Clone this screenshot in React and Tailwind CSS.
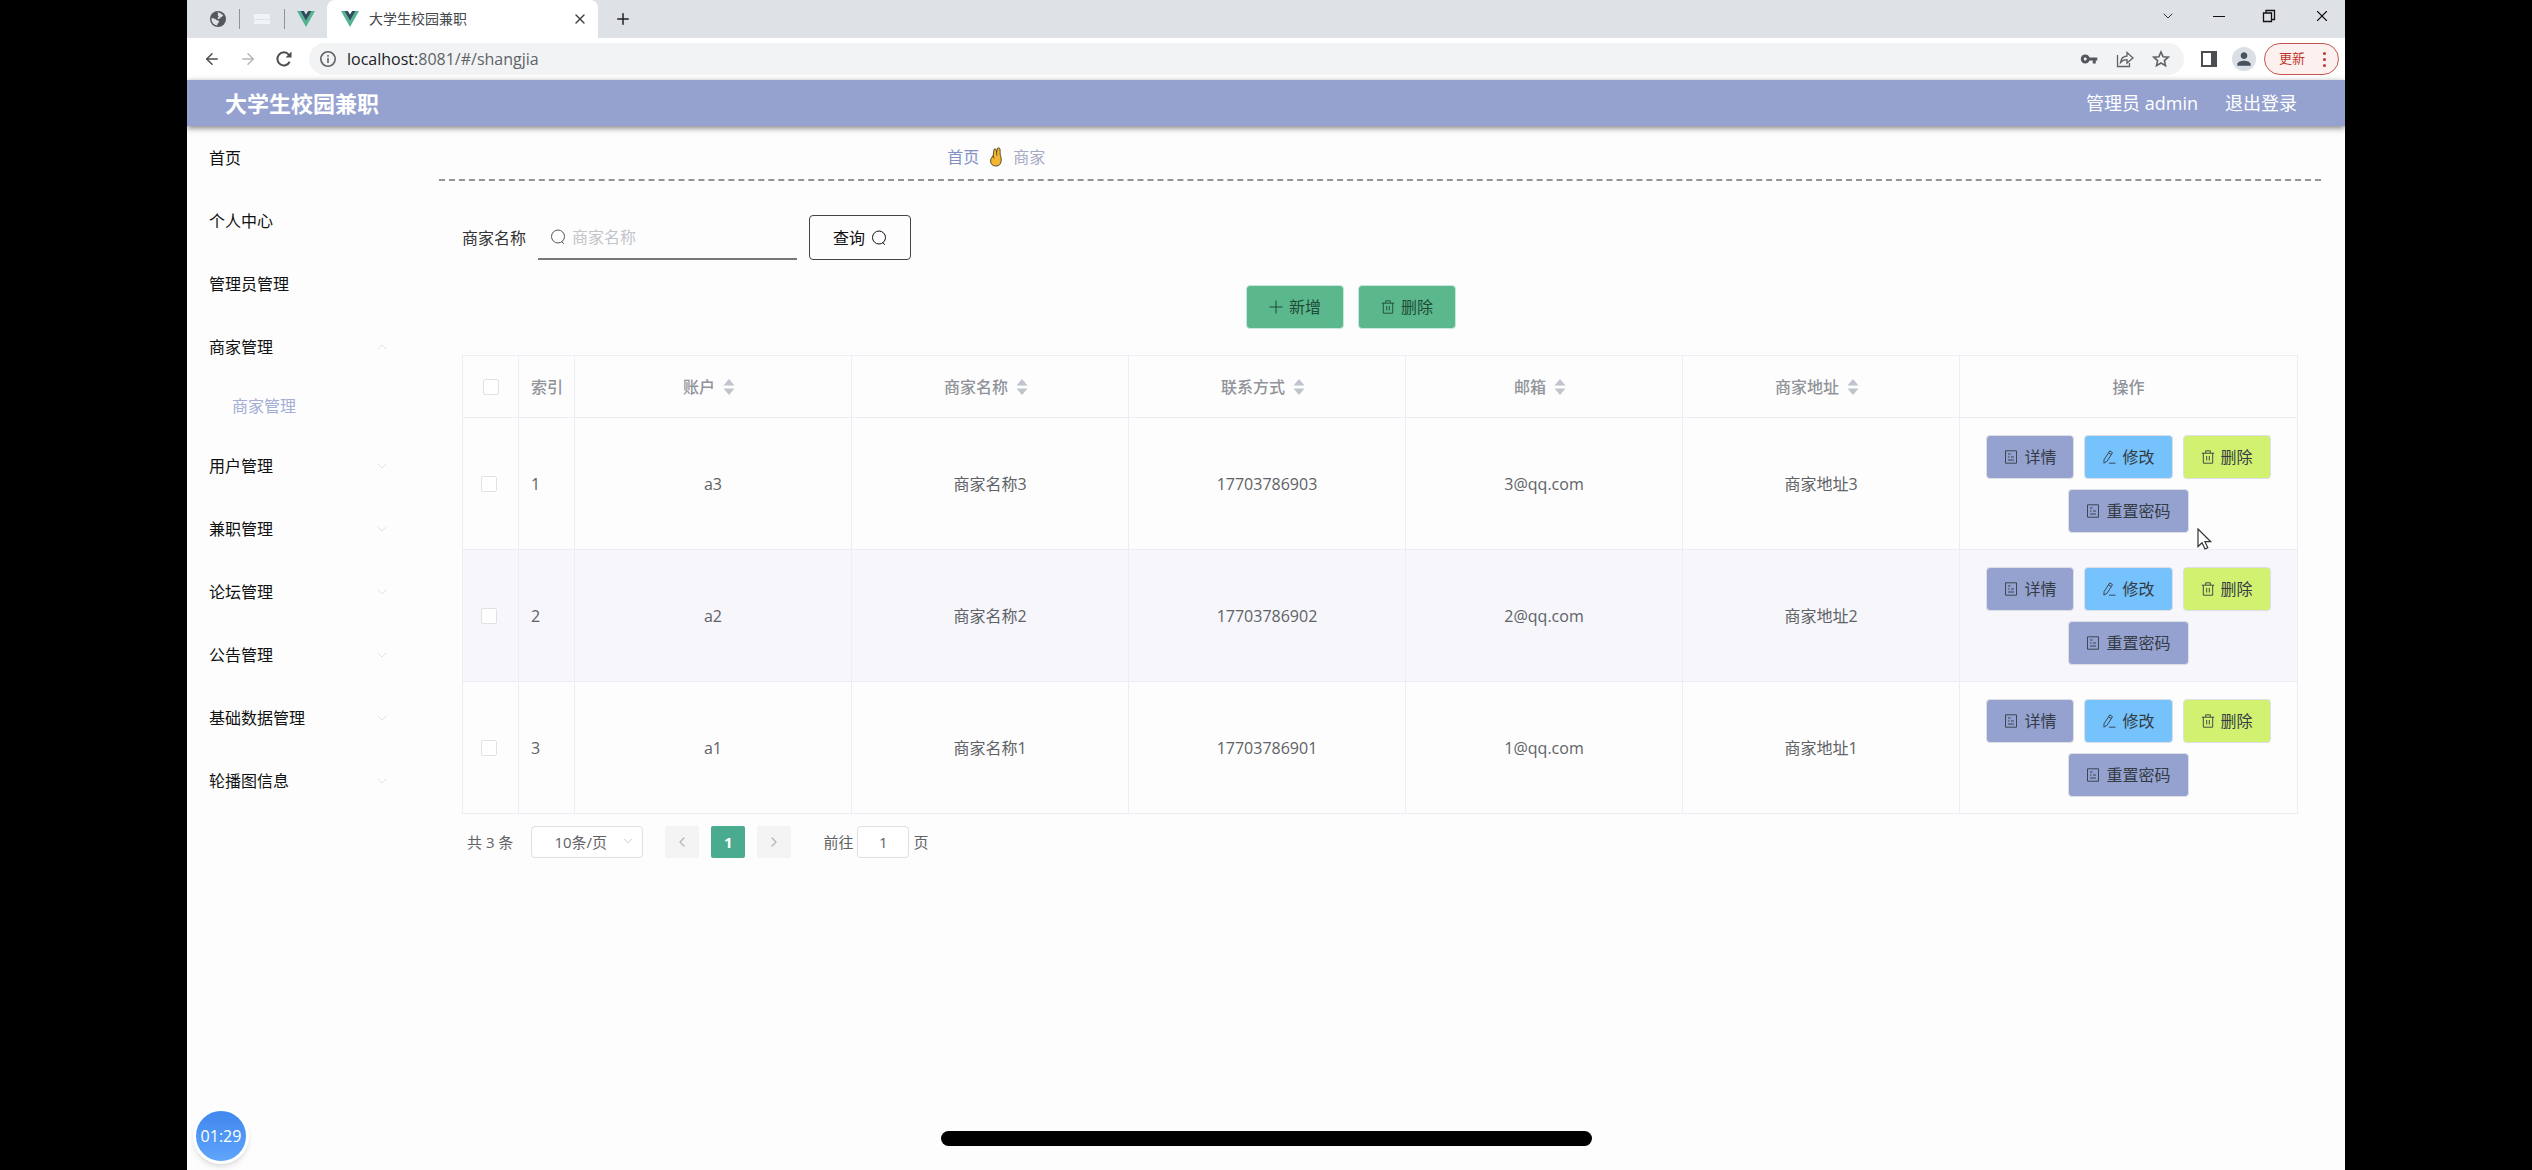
import { useState } from "react";
import { MdVpnKey, MdPerson } from "react-icons/md";
import {
  ArrowLeft,
  ArrowRight,
  ChevronDown,
  ChevronLeft,
  ChevronRight,
  ChevronUp,
  Plus,
  X,
} from "lucide-react";

const menus = [
  { label: "首页" },
  { label: "个人中心" },
  { label: "管理员管理" },
  { label: "商家管理", open: true, children: ["商家管理"] },
  { label: "用户管理", children: [] },
  { label: "兼职管理", children: [] },
  { label: "论坛管理", children: [] },
  { label: "公告管理", children: [] },
  { label: "基础数据管理", children: [] },
  { label: "轮播图信息", children: [] },
];

const columns = ["账户", "商家名称", "联系方式", "邮箱", "商家地址"];

const rows = [
  ["a3", "商家名称3", "17703786903", "3@qq.com", "商家地址3"],
  ["a2", "商家名称2", "17703786902", "2@qq.com", "商家地址2"],
  ["a1", "商家名称1", "17703786901", "1@qq.com", "商家地址1"],
];

const VueLogo = () => (
  <svg viewBox="0 0 18 16" className="h-4 w-[18px] shrink-0">
    <path d="M0 0h6.8L9 3.8 11.2 0H18L9 16z" fill="#56b392" />
    <path d="M3.6 0h3.2L9 3.8 11.2 0h3.2L9 9.6z" fill="#34495e" />
  </svg>
);

const GlobeIcon = () => (
  <svg viewBox="0 0 18 18" className="size-[18px]">
    <circle cx="9" cy="9" r="8" fill="#54585d" />
    <path
      d="M8 2.500c2.500-.3 5 1 6.300 3.300-1 .2-1.300 1.200-2.300 1.400-1.200.2-1 1.600-2.200 1.700-1.500.1-1.400-1.300-.4-1.900 1-.7-.8-1-.6-2 .1-.8.8-1.200-.8-2.500z"
      fill="#dee1e6"
    />
    <path
      d="M2.400 8.300c2.200-.2 3.500.4 4.800 1.400 1 .8 2.800.3 2.900 1.800.1 1.300-1.300 1.300-1.500 2.300-.2.900-.3 1.500-1 1.700-3-.6-5.300-3.500-5.200-7.200z"
      fill="#dee1e6"
    />
  </svg>
);

const ReloadIcon = () => (
  <svg viewBox="0 0 18 18" className="size-[18px]" fill="none" stroke="#4a4d51" strokeWidth="2">
    <path d="M14.700 11.800A6.500 6.500 0 1 1 13.800 4.600L15.500 6.300" />
    <path d="M16.500 1.500v6h-6z" fill="#4a4d51" stroke="none" />
  </svg>
);

const InfoIcon = () => (
  <svg viewBox="0 0 18 18" className="size-[18px] shrink-0" fill="none" stroke="#5f6368" strokeWidth="1.600">
    <circle cx="9" cy="9" r="7.200" />
    <path d="M9 8v5M9 5v1.800" />
  </svg>
);

const ShareIcon = () => (
  <svg viewBox="0 0 18 18" className="size-[18px]" fill="none" stroke="#5f6368" strokeWidth="1.300">
    <path d="M1.500 5v11.500h12V13" />
    <path d="M4.500 12.500C5 8.500 7.500 6.300 11 6V2.500L17 8l-6 5v-3.300c-3 0-5 .8-6.500 2.800z" />
  </svg>
);

const StarIcon = () => (
  <svg viewBox="0 0 18 18" className="size-[18px]" fill="none" stroke="#5f6368" strokeWidth="1.600">
    <path d="M9 2l2.100 4.700 5.100.5-3.800 3.400 1.100 5L9 13l-4.500 2.600 1.100-5L1.800 7.200l5.100-.5z" />
  </svg>
);

const PanelIcon = () => (
  <svg viewBox="0 0 18 18" className="size-[18px]" fill="none" stroke="#4a4d51" strokeWidth="2">
    <path d="M2 2h14v14H2z" />
    <path d="M11 2h5v14h-5z" fill="#4a4d51" stroke="none" />
  </svg>
);

const RestoreIcon = () => (
  <svg viewBox="0 0 14 14" className="size-3.5" fill="none" stroke="#111" strokeWidth="1.300">
    <path d="M1.500 4h8v8.500h-8zM4 4V1.500h8.500v9H9.500" />
  </svg>
);

const SearchIcon = () => (
  <svg viewBox="0 0 16 16" className="size-4 shrink-0" fill="none" stroke="currentColor">
    <circle cx="8" cy="7.500" r="6.500" />
    <path d="M11.500 12.500l2.500 2.300" />
  </svg>
);

const TrashIcon = () => (
  <svg viewBox="0 0 14 14" className="size-3.5 shrink-0" fill="none" stroke="currentColor" strokeWidth="0.900">
    <path d="M.8 3.200h12.400M2.300 3.200v10h9.400v-10M4.700 3V.8h4.600V3M5.700 6v4.500M8.300 6v4.500" />
  </svg>
);

const DocIcon = () => (
  <svg viewBox="0 0 14 14" className="size-3.5 shrink-0" fill="none" stroke="currentColor" strokeWidth="0.900">
    <path d="M1.500.8h11v12.400h-11zM4 4h2.500M4 7h1.500M7 7h3M4 10h6" />
  </svg>
);

const EditIcon = () => (
  <svg viewBox="0 0 14 14" className="size-3.5 shrink-0" fill="none" stroke="currentColor" strokeWidth="0.900">
    <path d="M7.800.9l2.700 1.700L5 11.300l-3.100 1.800.2-3.500zM6.600 2.900l2.700 1.600M7 13.200h6.500" />
  </svg>
);

const PlusIcon = () => (
  <svg viewBox="0 0 14 14" className="size-3.5 shrink-0" fill="none" stroke="currentColor">
    <path d="M7 .5v13M.5 7h13" />
  </svg>
);

const HandIcon = () => (
  <svg viewBox="0 0 14 20" className="h-5 w-3.5" stroke="#4a3f25" strokeWidth="0.900" strokeLinejoin="round">
    <path
      d="M2 11.500L4.200 8.500 5 2.500Q6 1 7 2.500L7.600 5 8.500 1.200Q10 .2 11 1.800L11.200 8Q12.500 10 12.200 14 11.500 19 7 19 1.800 19 1.600 14z"
      fill="#f2b630"
    />
    <path d="M4.200 8.500L5 11.500M7.600 5L7.800 8.500" fill="none" />
  </svg>
);

const SortCaret = () => (
  <svg viewBox="0 0 12 16" className="mx-2 h-4 w-3" fill="#c0c4cc">
    <path d="M6 0l5.500 6.500H.5zM6 16L.5 9.500h11z" />
  </svg>
);

const BrowserBar = () => (
  <div className="font-['Open_Sans','Noto_Sans_CJK_SC',sans-serif]">
    <div className="flex h-[38px] items-center bg-[#dee1e6] pl-[22px]">
      <GlobeIcon />
      <span className="ml-3 h-5 w-px bg-[#8f9296]" />
      <span className="mx-3.5 flex h-2.5 w-4 flex-col justify-center bg-[#f0f3f7]">
        <span className="h-px bg-[#dee1e6]" />
      </span>
      <span className="mr-3 h-5 w-px bg-[#8f9296]" />
      <VueLogo />
      <div className="ml-3 flex h-full w-[271px] items-center rounded-t-lg bg-white pr-2.5 pl-3.5">
        <VueLogo />
        <span className="ml-2.5 flex-1 text-sm text-[#45484d]">大学生校园兼职</span>
        <button type="button" aria-label="关闭标签页">
          <X className="size-4 text-[#3c4043]" />
        </button>
      </div>
      <button type="button" aria-label="新标签页" className="ml-4">
        <Plus className="size-[18px] text-[#202124]" />
      </button>
      <div className="mr-3.5 mb-1.5 ml-auto flex items-center gap-[37px]">
        <ChevronDown className="size-4 text-[#333]" strokeWidth={1.5} />
        <span className="h-px w-3 bg-[#111]" />
        <RestoreIcon />
        <X className="size-[18px] text-[#111]" strokeWidth={1.5} />
      </div>
    </div>

    <div className="flex h-[42px] items-center bg-white pr-1.5 pl-4">
      <ArrowLeft className="size-[18px] text-[#4a4d51]" />
      <ArrowRight className="ml-[18px] size-[18px] text-[#b4b6b9]" />
      <span className="ml-[18px]">
        <ReloadIcon />
      </span>
      <div className="ml-4 flex h-8 flex-1 items-center rounded-full bg-[#f1f3f4] pr-3.5 pl-2.5">
        <InfoIcon />
        <span className="ml-2.5 text-base text-[#5f6368]">
          <span className="text-[#202124]">localhost:</span>8081/#/shangjia
        </span>
        <span className="ml-auto flex items-center gap-[18px]">
          <MdVpnKey className="size-[18px] text-[#54585d]" />
          <ShareIcon />
          <StarIcon />
        </span>
      </div>
      <span className="ml-4">
        <PanelIcon />
      </span>
      <span className="ml-3.5 flex size-6 items-center justify-center rounded-full bg-[#dadfe6]">
        <MdPerson className="size-5 text-[#47525f]" />
      </span>
      <button
        type="button"
        className="ml-2 flex h-8 w-[75px] items-center justify-between rounded-full border border-[#c5564f] bg-[#fdf1f0] pr-3 pl-3.5 text-[13px] text-[#c0352b]"
      >
        更新
        <span className="flex flex-col gap-[3px]">
          <i className="size-[3px] rounded-full bg-[#c0352b]" />
          <i className="size-[3px] rounded-full bg-[#c0352b]" />
          <i className="size-[3px] rounded-full bg-[#c0352b]" />
        </span>
      </button>
    </div>
  </div>
);

const Sidebar = () => (
  <nav className="w-[252px] shrink-0 text-base text-[#111]">
    {menus.map((menu) => (
      <div key={menu.label}>
        <a href="#/" className="flex h-[63px] items-center justify-between pr-[49px] pl-[22px]">
          {menu.label}
          {menu.children &&
            (menu.open ? (
              <ChevronUp className="size-4 text-[#e2e3e6]" strokeWidth={1.5} />
            ) : (
              <ChevronDown className="size-4 text-[#e2e3e6]" strokeWidth={1.5} />
            ))}
        </a>
        {menu.open &&
          menu.children.map((child) => (
            <a
              key={child}
              href="#/shangjia"
              className="flex h-14 items-center pl-[45px] text-[#a3aed6]"
            >
              {child}
            </a>
          ))}
      </div>
    ))}
  </nav>
);

const ActionButton = ({ icon, color, children }) => (
  <button
    type="button"
    className={`flex h-11 items-center gap-1.5 rounded border border-[#dcdfe6] px-[17px] text-[#333b45] ${color}`}
  >
    {icon}
    {children}
  </button>
);

const checkboxClass =
  "block size-4 appearance-none rounded-xs border border-[#dfe1e6] bg-white checked:bg-[#4aab8f]";

const ShopTable = () => {
  const [selected, setSelected] = useState([]);

  const toggle = (id) =>
    setSelected((prev) =>
      prev.includes(id) ? prev.filter((item) => item !== id) : [...prev, id]
    );

  const toggleAll = () =>
    setSelected(selected.length === rows.length ? [] : rows.map((row) => row[0]));

  return (
    <table className="mt-[26px] w-full table-fixed border-collapse border border-[#ebeef5] text-base text-[#606266] [&_td]:border [&_td]:border-[#ebeef5] [&_th]:border [&_th]:border-[#ebeef5]">
      <colgroup>
        <col className="w-14" />
        <col className="w-14" />
        {columns.map((column) => (
          <col key={column} />
        ))}
        <col className="w-[338px]" />
      </colgroup>
      <thead>
        <tr className="h-[62px] text-[#909399]">
          <th className="pl-5">
            <input
              type="checkbox"
              aria-label="全选"
              className={checkboxClass}
              checked={selected.length === rows.length}
              onChange={toggleAll}
            />
          </th>
          <th className="pl-3 text-left font-medium">索引</th>
          {columns.map((column) => (
            <th key={column} className="font-medium">
              <span className="flex items-center justify-center">
                {column}
                <SortCaret />
              </span>
            </th>
          ))}
          <th className="font-medium">操作</th>
        </tr>
      </thead>
      <tbody>
        {rows.map((row, index) => (
          <tr key={row[0]} className="h-[132px] even:bg-[#f6f6fb]">
            <td className="pl-[18px]">
              <input
                type="checkbox"
                aria-label={`选择 ${row[0]}`}
                className={checkboxClass}
                checked={selected.includes(row[0])}
                onChange={() => toggle(row[0])}
              />
            </td>
            <td className="pl-3">{index + 1}</td>
            {row.map((value) => (
              <td key={value} className="text-center">
                {value}
              </td>
            ))}
            <td>
              <div className="flex flex-wrap justify-center gap-2.5">
                <ActionButton icon={<DocIcon />} color="bg-[#95a2cf]">
                  详情
                </ActionButton>
                <ActionButton icon={<EditIcon />} color="bg-[#75c2fc]">
                  修改
                </ActionButton>
                <ActionButton icon={<TrashIcon />} color="bg-[#d2f170]">
                  删除
                </ActionButton>
                <ActionButton icon={<DocIcon />} color="bg-[#95a2cf]">
                  重置密码
                </ActionButton>
              </div>
            </td>
          </tr>
        ))}
      </tbody>
    </table>
  );
};

const Pagination = () => (
  <div className="mt-3 flex h-8 items-center pl-[5px] text-[15px] text-[#606266]">
    <span>共 3 条</span>
    <div className="relative ml-[18px]">
      <select
        aria-label="每页条数"
        className="block h-8 w-[112px] appearance-none rounded border border-[#dcdfe6] bg-white pl-[22px]"
      >
        <option>10条/页</option>
      </select>
      <ChevronDown
        className="pointer-events-none absolute top-2 right-2 size-3.5 text-[#c0c4cc]"
        strokeWidth={1.5}
      />
    </div>
    <button
      type="button"
      aria-label="上一页"
      className="ml-[22px] flex h-8 w-[34px] items-center justify-center rounded-xs bg-[#f4f4f5]"
    >
      <ChevronLeft className="size-4 text-[#b4b8c0]" />
    </button>
    <button
      type="button"
      className="ml-3 h-8 w-[34px] rounded-xs bg-[#4aab8f] font-bold text-white"
    >
      1
    </button>
    <button
      type="button"
      aria-label="下一页"
      className="ml-3 flex h-8 w-[34px] items-center justify-center rounded-xs bg-[#f4f4f5]"
    >
      <ChevronRight className="size-4 text-[#b4b8c0]" />
    </button>
    <label htmlFor="page" className="ml-8">
      前往
    </label>
    <input
      id="page"
      type="text"
      defaultValue="1"
      className="mx-1 h-8 w-[52px] rounded border border-[#dcdfe6] bg-white text-center"
    />
    <span>页</span>
  </div>
);

const App = () => {
  return (
    <div className="min-h-screen bg-black px-[187px] font-['Open_Sans','Noto_Sans_CJK_SC',sans-serif]">
      <div className="relative min-h-screen bg-[#fdfdfd]">
        <BrowserBar />

        <header className="flex h-[46px] items-center bg-[#95a2cf] pr-12 pl-[38px] text-white shadow-[0_2px_6px_rgba(0,0,0,0.5)]">
          <h1 className="text-[22px] font-bold">大学生校园兼职</h1>
          <span className="ml-auto text-lg">管理员 admin</span>
          <button type="button" className="ml-[27px] text-lg">
            退出登录
          </button>
        </header>

        <div className="flex">
          <Sidebar />

          <main className="mr-6 flex-1">
            <div className="flex h-[55px] items-center gap-2.5 border-b-2 border-dashed border-[#949494] pt-2 pl-[27%] text-base">
              <a href="#/" className="text-[#8490c4]">
                首页
              </a>
              <HandIcon />
              <span className="text-[#a5abc4]">商家</span>
            </div>

            <div className="px-[23px] pt-[34px]">
              <form className="flex h-[45px] items-center text-base">
                <label htmlFor="shopName" className="text-[#333]">
                  商家名称
                </label>
                <div className="ml-3 flex h-full w-[259px] items-center gap-1.5 border-b-2 border-[#777] pl-3 text-[#555]">
                  <SearchIcon />
                  <input
                    id="shopName"
                    type="text"
                    placeholder="商家名称"
                    className="w-full outline-none placeholder:text-[#c3c5cb]"
                  />
                </div>
                <button
                  type="button"
                  className="ml-3 flex h-full items-center gap-1.5 rounded border border-[#444] px-[23px] text-[#111]"
                >
                  查询
                  <SearchIcon />
                </button>
              </form>

              <div className="mt-[25px] flex justify-center gap-3.5 pr-[58px] text-base">
                <button
                  type="button"
                  className="flex h-11 items-center gap-1.5 rounded border border-[#c9e8dc] bg-[#5bb88c] px-[22px] text-[#1f4a38]"
                >
                  <PlusIcon />
                  新增
                </button>
                <button
                  type="button"
                  className="flex h-11 items-center gap-1.5 rounded border border-[#c9e8dc] bg-[#5bb88c] px-[22px] text-[#1f4a38]"
                >
                  <TrashIcon />
                  删除
                </button>
              </div>

              <ShopTable />
              <Pagination />
            </div>
          </main>
        </div>

        {/* recorder timer */}
        <div className="absolute bottom-1.5 left-1.5 flex size-14 items-center justify-center rounded-full border-[3px] border-white bg-linear-to-b from-[#4187ee] to-[#5fa5fb] text-base text-white shadow-md">
          01:29
        </div>

        {/* home indicator */}
        <div className="absolute inset-x-0 bottom-6 mx-auto h-[15px] w-[651px] rounded-full bg-black" />

        {/* mouse pointer */}
        <svg
          viewBox="0 0 15 22"
          className="absolute top-[528px] right-[133px] h-[22px] w-[15px]"
          fill="#fff"
          stroke="#333"
          strokeWidth="1.200"
        >
          <path d="M1 1v17.500l4-3.800 3 6.300 2.800-1.300-2.900-6H13.800z" />
        </svg>
      </div>
    </div>
  );
};

export default App;
